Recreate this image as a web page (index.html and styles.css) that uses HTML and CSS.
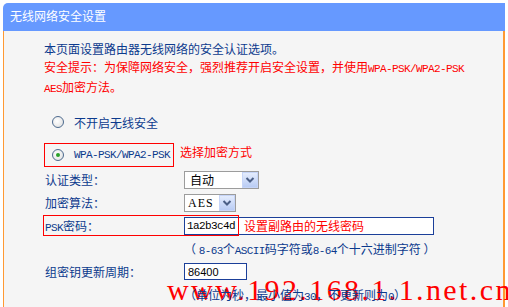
FILE: index.html
```html
<!DOCTYPE html>
<html lang="zh-CN">
<head>
  <meta charset="UTF-8">
  <title>无线网络安全设置</title>
  <link rel="stylesheet" href="styles.css">
</head>
<body>
  <div class="panel">
    <div class="panel-title">无线网络安全设置</div>
    <div class="panel-body">
      <p class="intro">本页面设置路由器无线网络的安全认证选项。</p>
      <p class="warn">安全提示：为保障网络安全，强烈推荐开启安全设置，并使用<span class="en">WPA-PSK/WPA2-PSK</span><br><span class="en">AES</span>加密方法。</p>

      <div class="radio-line first">
        <label class="radio-item"><span class="radio"></span>不开启无线安全</label>
      </div>
      <div class="radio-line">
        <label class="radio-item marked"><span class="radio checked"></span><span class="en">WPA-PSK/WPA2-PSK</span></label>
        <span class="note">选择加密方式</span>
      </div>

      <div class="form">
        <span class="label">认证类型：</span>
        <div class="select wide">
          <span class="select-text">自动</span>
          <span class="select-btn"><svg width="10" height="8" viewBox="0 0 10 8"><path d="M1.5 2 L5 5.5 L8.5 2" fill="none" stroke="#4b5f86" stroke-width="2"/></svg></span>
        </div>

        <span class="label">加密算法：</span>
        <div class="select narrow">
          <span class="select-text serif">AES</span>
          <span class="select-btn"><svg width="10" height="8" viewBox="0 0 10 8"><path d="M1.5 2 L5 5.5 L8.5 2" fill="none" stroke="#4b5f86" stroke-width="2"/></svg></span>
        </div>

        <span class="label"><span class="en">PSK</span>密码：</span>
        <div class="field psk"><span class="en">1a2b3c4d</span><span class="field-note">设置副路由的无线密码</span></div>

        <span></span>
        <span class="hint">（ <span class="en">8-63</span>个<span class="en">ASCII</span>码字符或<span class="en">8-64</span>个十六进制字符 ）</span>

        <span class="label">组密钥更新周期：</span>
        <div class="field period">86400</div>

        <span></span>
        <span class="hint">（单位为秒，最小值为<span class="en">30</span>，不更新则为<span class="en">0</span>）</span>

        <div class="psk-mark"></div>
      </div>

      <div class="watermark">www.192.168.1.1.net.cn</div>
    </div>
  </div>
</body>
</html>
```

FILE: styles.css
```css
* {
  margin: 0;
  padding: 0;
  box-sizing: border-box;
}

html, body {
  overflow: hidden;
}

body {
  background-color: #fff;
  font-family: "Noto Sans CJK SC", sans-serif;
  font-size: 12px;
  color: #0c3a8d;
}

.en {
  font-family: "Liberation Mono", monospace;
  font-size: 11px;
  letter-spacing: -0.6px;
}

/* Panel */
.panel {
  margin: 3px 0 0 3px;
  width: 502px;
}

.panel-title {
  height: 28px;
  background-color: #6699ff;
  color: #fff;
  line-height: 25px;
  padding-left: 7px;
  border-radius: 5px 0 0 0;
}

.panel-body {
  position: relative;
  z-index: 0;
  height: 276px;
  background-color: #f5f5f5;
  border-left: 1px solid #ff9933;
  border-right: 2px solid #ff9933;
  padding: 9px 0 0 40px;
}

.intro, .warn {
  line-height: 18px;
}

.warn {
  color: #ff0000;
}

/* Radio rows */
.radio-line {
  display: flex;
  align-items: flex-start;
  margin-top: 9px;
}

.radio-line.first {
  margin-top: 12px;
}

.radio-item {
  display: flex;
  align-items: center;
  gap: 10px;
  width: 130px;
  height: 24px;
  border: 1px solid transparent;
  padding-left: 7px;
}

.radio-item.marked {
  border-color: #ff0000;
}

.radio {
  width: 12px;
  height: 12px;
  border: 1px solid #4d6a8e;
  border-radius: 50%;
  background: radial-gradient(circle at 40% 40%, #fff, #dcdcdc);
  display: flex;
  align-items: center;
  justify-content: center;
}

.radio.checked::after {
  content: "";
  width: 4px;
  height: 4px;
  border-radius: 50%;
  background-color: #2aa12a;
}

.note {
  color: #ff0000;
  line-height: 18px;
  margin-left: 6px;
}

/* Form grid */
.form {
  position: relative;
  display: grid;
  grid-template-columns: 140px auto;
  grid-auto-rows: 23px;
  align-items: center;
  margin-top: 1px;
}

.label {
  padding-left: 1px;
}

.select {
  display: flex;
  justify-self: start;
  height: 18px;
  border: 1px solid #9c9c9c;
  background-color: #fff;
}

.select.wide {
  width: 75px;
}

.select.narrow {
  width: 52px;
}

.select-text {
  flex: 1;
  padding-left: 5px;
  line-height: 16px;
  color: #000;
}

.select-text.serif {
  font-family: "Liberation Serif", serif;
  font-size: 12px;
  letter-spacing: 1px;
  padding-left: 3px;
}

.select-btn {
  width: 16px;
  border: 1px solid #c6d5f8;
  background: linear-gradient(#e4ecfd, #b9ccf4);
  display: flex;
  align-items: center;
  justify-content: center;
}

.field {
  display: flex;
  align-items: center;
  justify-self: start;
  height: 18px;
  border: 1px solid #1b3f99;
  background-color: #fff;
  padding-left: 2px;
  color: #000;
}

.field.psk {
  width: 250px;
}

.field.period {
  width: 63px;
  height: 17px;
  padding-left: 3px;
  font-family: "Liberation Sans", sans-serif;
  font-size: 11px;
}

.field-note {
  color: #ff0000;
  margin-left: 9px;
}

.hint {
  white-space: nowrap;
}

.psk-mark {
  position: absolute;
  left: -1px;
  top: 47px;
  width: 196px;
  height: 21px;
  border: 1px solid #ff0000;
}

/* Watermark laid over the picture */
.watermark {
  position: absolute;
  z-index: -1;
  left: 163px;
  top: 244px;
  font-family: "Liberation Serif", serif;
  font-size: 30px;
  line-height: 30px;
  letter-spacing: 2.4px;
  color: #ff0000;
  white-space: nowrap;
}
```
